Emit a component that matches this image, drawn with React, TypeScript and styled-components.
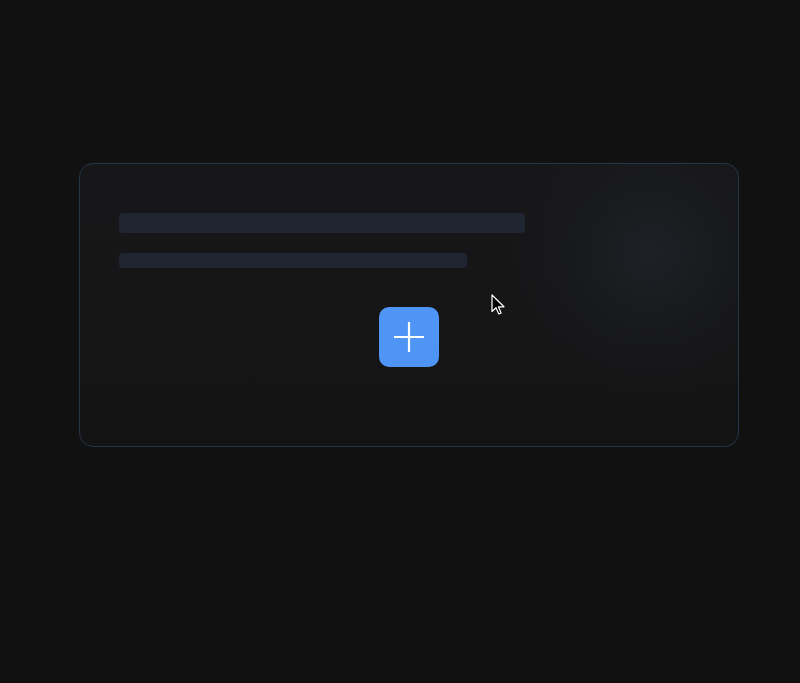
import { createGlobalStyle, styled } from 'styled-components';

const GlobalStyle = createGlobalStyle`
  html, body {
    margin: 0;
    padding: 0;
    background: #121112;
    font-family: Inter, "Noto Sans", sans-serif;
  }
`;

const Page = styled.div`
  position: relative;
  height: 683px;
  padding: 163px 0 0 79px;
  box-sizing: border-box;
`;

const Card = styled.div`
  width: 660px;
  height: 284px;
  box-sizing: border-box;
  border: 1px solid #26354a;
  border-radius: 14px;
  padding: 49px 39px 0;
  background:
    radial-gradient(circle 140px at 570px 90px, rgba(31, 34, 40, 0.85) 0%, rgba(27, 29, 34, 0.45) 55%, rgba(21, 21, 23, 0) 100%),
    linear-gradient(180deg, #171719 0%, #141415 100%);
  display: flex;
  flex-direction: column;
`;

const SkeletonBar = styled.div<{ $width: number; $height: number }>`
  width: ${(p) => p.$width}px;
  height: ${(p) => p.$height}px;
  border-radius: 4px;
  background: #1f2531;
`;

const Bars = styled.div`
  display: flex;
  flex-direction: column;
  gap: 20px;
`;

const AddButton = styled.button`
  align-self: center;
  margin-top: 39px;
  width: 60px;
  height: 60px;
  border: none;
  border-radius: 10px;
  background: #4f95f6;
  display: flex;
  align-items: center;
  justify-content: center;
  padding: 0;
  cursor: pointer;
`;

const Cursor = styled.svg`
  position: absolute;
  left: 491px;
  top: 294px;
`;

export default function App() {
  return (
    <>
      <GlobalStyle />
      <Page>
        <Card>
          <Bars>
            <SkeletonBar $width={406} $height={20} />
            <SkeletonBar $width={348} $height={15} />
          </Bars>
          <AddButton aria-label="Add">
            <svg width="30" height="30" viewBox="0 0 30 30">
              <path d="M15 0v30M0 15h30" stroke="#fff" strokeWidth="2.2" />
            </svg>
          </AddButton>
        </Card>
        <Cursor width="14" height="22" viewBox="0 0 14 22">
          <path
            d="M1 1v16.5l4-3.8 2.8 6.3 2.3-1-2.7-6.2H13z"
            fill="#000"
            stroke="#fff"
            strokeWidth="1.2"
            strokeLinejoin="round"
          />
        </Cursor>
      </Page>
    </>
  );
}
